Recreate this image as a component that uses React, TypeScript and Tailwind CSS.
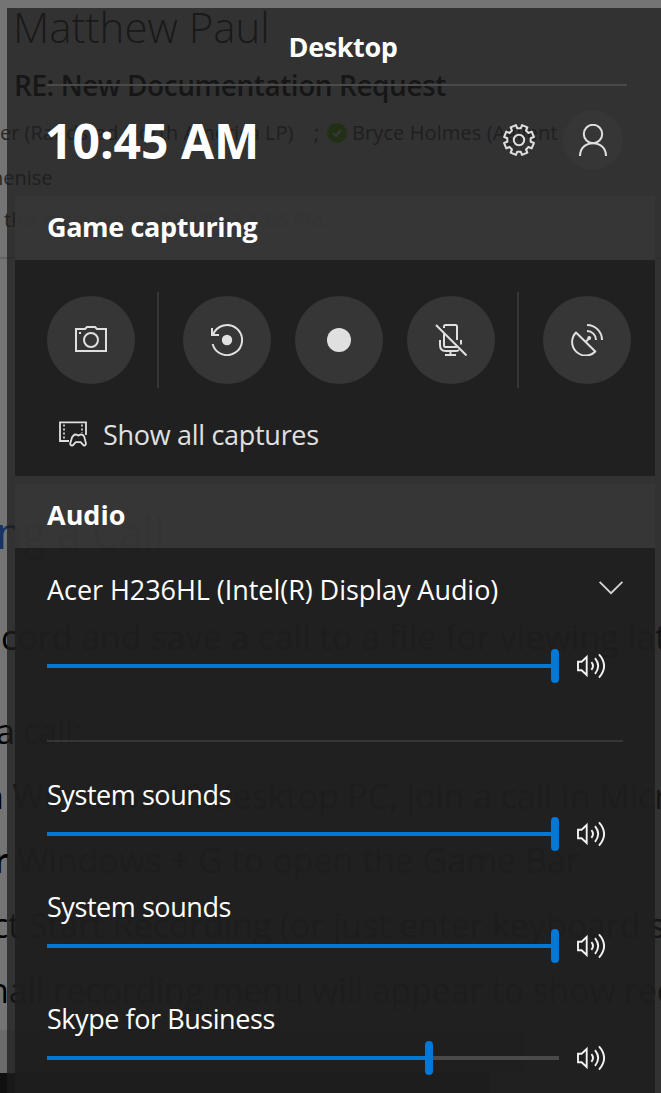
import type { ReactNode } from 'react';

const ICON = '#e0e0e0';

function gearPath(): string {
  const pts: string[] = [];
  for (let i = 0; i < 8; i++) {
    const mid = 22.5 + i * 45;
    const corners: [number, number][] = [
      [-14, 11.8],
      [-11, 15.2],
      [11, 15.2],
      [14, 11.8],
    ];
    for (const [da, r] of corners) {
      const a = ((mid + da) * Math.PI) / 180;
      pts.push(`${(16 + r * Math.sin(a)).toFixed(2)} ${(16 - r * Math.cos(a)).toFixed(2)}`);
    }
  }
  return `M${pts.join('L')}Z`;
}

function GearIcon() {
  return (
    <svg width="32" height="32" viewBox="0 0 32 32" fill="none" stroke={ICON} strokeWidth="2" strokeLinejoin="round">
      <path d={gearPath()} />
      <circle cx="16" cy="16" r="5.2" />
    </svg>
  );
}

function PersonIcon() {
  return (
    <svg width="32" height="32" viewBox="0 0 32 32" fill="none" stroke={ICON} strokeWidth="2">
      <circle cx="16" cy="10" r="9.2" />
      <path d="M3 32C3 24 9 19.2 16 19.2S29 24 29 32" />
    </svg>
  );
}

function CameraIcon() {
  return (
    <svg width="32" height="32" viewBox="0 0 32 32" fill="none" stroke={ICON} strokeWidth="2">
      <path d="M1 5H10L12 3H20L22 5H31V27H1Z" />
      <circle cx="16" cy="16" r="7" />
      <rect x="4" y="8" width="2" height="2" fill={ICON} stroke="none" />
    </svg>
  );
}

function ReplayIcon() {
  return (
    <svg width="32" height="32" viewBox="0 0 32 32" fill="none" stroke={ICON} strokeWidth="2">
      <path d="M2.2 10.4A15 15 0 1 1 1.6 20" />
      <path d="M1 4V11H8" />
      <circle cx="16" cy="16" r="5.2" fill={ICON} stroke="none" />
    </svg>
  );
}

function RecordIcon() {
  return (
    <svg width="32" height="32" viewBox="0 0 32 32">
      <circle cx="16" cy="16" r="12" fill={ICON} />
    </svg>
  );
}

function MicOffIcon() {
  return (
    <svg width="32" height="32" viewBox="0 0 32 32" fill="none" stroke={ICON} strokeWidth="2">
      <path d="M9 4V2.5Q9 1 10.5 1H20.5Q22 1 22 2.5V16" />
      <path d="M9 9V21.5Q9 23 10.5 23H22" />
      <path d="M5 16V21Q5 27 10.5 27H20.5Q22.5 27 24 26" />
      <path d="M26 16V20.5" />
      <path d="M15.5 27V31M10 31H21" />
      <path d="M1 1L31.5 31.5" />
    </svg>
  );
}

function BroadcastIcon() {
  return (
    <svg width="32" height="32" viewBox="0 0 32 32" fill="none" stroke={ICON} strokeWidth="2">
      <path d="M5 8.5L24.3 27.5A13 13 0 1 1 5 8.5Z" strokeLinejoin="round" />
      <path d="M14.5 18L18 14.5" />
      <circle cx="18.2" cy="14" r="2" fill={ICON} stroke="none" />
      <path d="M16 7A9 9 0 0 1 25 16" />
      <path d="M16 1A15 15 0 0 1 31 16" />
    </svg>
  );
}

function CapturesIcon() {
  return (
    <svg width="28" height="26" viewBox="0 0 28 26" fill="none" stroke={ICON} strokeWidth="1.8">
      <path d="M10 20H1V1.4H27V14" />
      <path d="M5 3.4V19M23 3.4V12" strokeWidth="1.6" strokeDasharray="2 2" />
      <path
        d="M14.4 14.6Q15.6 13.2 17.4 13.6L19 14.6L21.4 13.6Q24 13 25.2 15.6L27 22.6Q26.6 25 24.6 24.4L21.6 21.2H16.8L13.8 24.4Q11.4 25 11.2 22.6L13 16.4Z"
        strokeLinejoin="round"
      />
    </svg>
  );
}

function VolumeIcon() {
  return (
    <svg width="30" height="32" viewBox="0 0 30 32" fill="none" stroke="#f2f2f2" strokeWidth="1.9">
      <path d="M2 11.8H5.6L10.7 7V25L5.6 20.2H2Z" />
      <path d="M15.4 12.2Q18.6 16 15.4 19.8" />
      <path d="M19 8.2Q25.4 16 19 23.8" />
      <path d="M23 4.4Q33.2 16 23 27.6" />
    </svg>
  );
}

function ChevronIcon() {
  return (
    <svg width="24" height="14" viewBox="0 0 24 14" fill="none" stroke="#d6d6d6" strokeWidth="1.8">
      <path d="M0.6 0.8L12 12.2L23.4 0.8" />
    </svg>
  );
}

function DocumentPage() {
  return (
    <div className="flex h-full flex-col whitespace-nowrap text-black">
      <div className="h-[52px] shrink-0 pl-[13px] text-[42px] leading-[54px] font-light text-[#101010]">Matthew Paul</div>
      <div className="mt-[15px] h-9 shrink-0 pl-[14px] text-[28px] leading-[37px] font-semibold tracking-[-0.45px]">
        RE: New Documentation Request
      </div>
      <div className="mt-[18px] flex h-6 shrink-0 items-center text-[20px] leading-6 text-[#282828]">
        <span className="w-[314px]">er (Randstad North America LP)</span>
        <span className="w-[13px]">;</span>
        <span className="flex size-5 items-center justify-center rounded-full bg-[#2e6a00]">
          <svg width="12" height="12" viewBox="0 0 12 12" fill="none" stroke="#8a8a8a" strokeWidth="2">
            <path d="M2 6L5 9L10 3" />
          </svg>
        </span>
        <span className="ml-[5px] tracking-[0.1px]">Bryce Holmes (Agilent</span>
      </div>
      <div className="mt-5 -ml-[9px] h-6 shrink-0 text-[20px] leading-[25px] text-[#282828]">henise</div>
      <div className="mt-[18px] h-6 shrink-0 pl-1 text-[20px] leading-[25px] text-[#282828]">
        this message on 1/1/2018 1:06 PM.
      </div>
      <div className="mt-[26px] h-0.5 shrink-0 bg-[#646464]" />
      <div className="mt-[244px] -ml-1 h-[60px] shrink-0 text-[43px] leading-[60px] text-[#163262]">ng a Call</div>
      <div className="mt-[50px] h-12 shrink-0 pl-px text-[34px] leading-[48px]">
        cord and save a call to a file for viewing later
      </div>
      <div className="mt-[46px] -ml-1 h-12 shrink-0 text-[34px] leading-[48px] tracking-[-0.5px]">a call:</div>
      <div className="mt-[17px] -ml-[17px] h-12 shrink-0 text-[34px] leading-[48px] tracking-[-0.12px]">
        n Windows 10 desktop PC, join a call in Microsoft
      </div>
      <div className="mt-4 -ml-1.5 h-12 shrink-0 text-[34px] leading-[48px] tracking-[-0.1px]">
        <span className="font-semibold">r</span> Windows + G to open the Game Bar
      </div>
      <div className="mt-[17px] -ml-2 h-12 shrink-0 text-[34px] leading-[48px] tracking-[-0.1px]">
        ct Start Recording (or just enter keyboard sh
      </div>
      <div className="mt-[17px] -ml-3 h-12 shrink-0 text-[34px] leading-[48px] tracking-[-0.2px]">
        nall recording menu will appear to show reco
      </div>
      <div className="mt-4 h-[43px] w-[524px] shrink-0 bg-[#6b6b6b]" />
      <div className="h-5 w-[490px] shrink-0 bg-[#101010]" />
    </div>
  );
}

function SectionHeader({ children }: { children: ReactNode }) {
  return (
    <h2 className="h-16 bg-[#363636]/90 pl-8 text-[27px] leading-[62px] font-bold text-white">{children}</h2>
  );
}

function RoundButton({ label, children }: { label: string; children: ReactNode }) {
  return (
    <button aria-label={label} className="flex size-[88px] items-center justify-center rounded-full bg-[#363636]">
      {children}
    </button>
  );
}

function Slider({ value }: { value: number }) {
  return (
    <div className="flex items-center">
      <div className="flex w-[512px] items-center">
        <div className="h-1 bg-[#0078d7]" style={{ width: value }} />
        <div className="h-[34px] w-2 rounded-full bg-[#0078d7]" />
        <div className="h-1 flex-1 bg-[#4a4a4a]" />
      </div>
      <div className="ml-[17px]">
        <VolumeIcon />
      </div>
    </div>
  );
}

const apps = [
  { name: 'System sounds', value: 504 },
  { name: 'System sounds', value: 504 },
  { name: 'Skype for Business', value: 378 },
];

export default function App() {
  return (
    <div className="relative h-[1093px] w-full overflow-hidden bg-[#747474] font-['Open_Sans',sans-serif]">
      <DocumentPage />
      <main className="absolute top-2 left-[7px] h-[1085px] w-[672px] bg-[#1d1d1d]/76">
        <header className="flex h-[188px] flex-col">
          <h1 className="h-[76px] pt-px text-center text-[27px] leading-[76px] font-bold tracking-[-0.4px] text-white">
            Desktop
          </h1>
          <div className="mr-[52px] ml-10 h-0.5 bg-[#4a4a4a]" />
          <div className="flex h-[108px] items-center pr-14 pl-[38px]">
            <div className="flex-1 pt-0.5 text-[48px] leading-[60px] font-bold text-white">10:45 AM</div>
            <GearIcon />
            <div className="ml-7 flex size-[60px] items-center justify-center rounded-full bg-[#363636]/90">
              <PersonIcon />
            </div>
          </div>
        </header>

        <section className="ml-2 w-[640px]">
          <SectionHeader>
            <span className="tracking-[-0.37px]">Game capturing</span>
          </SectionHeader>
          <div className="h-[216px] bg-[#1e1e1e]/90 px-8 pt-8">
            <div className="flex h-24 w-[584px] items-center">
              <RoundButton label="Take screenshot"><CameraIcon /></RoundButton>
              <div className="mr-6 ml-[22px] h-24 w-0.5 bg-[#363636]" />
              <div className="flex gap-6">
                <RoundButton label="Record last"><ReplayIcon /></RoundButton>
                <RoundButton label="Start recording"><RecordIcon /></RoundButton>
                <RoundButton label="Microphone"><MicOffIcon /></RoundButton>
              </div>
              <div className="mr-6 ml-[22px] h-24 w-0.5 bg-[#363636]" />
              <RoundButton label="Broadcast"><BroadcastIcon /></RoundButton>
            </div>
            <div className="mt-[26px] flex h-10 items-center gap-4 pl-3 text-[27px] leading-10 tracking-[-0.3px] text-[#e0e0e0]">
              <CapturesIcon />
              <span className="pt-0.5">Show all captures</span>
            </div>
          </div>
        </section>

        <section className="mt-2 ml-2 w-[640px]">
          <SectionHeader>Audio</SectionHeader>
          <div className="h-[545px] bg-[#1e1e1e]/90 px-8 text-[27px] text-white">
            <div className="flex h-[83px] items-center justify-between">
              <span className="pt-0.5 tracking-[-0.05px]">Acer H236HL (Intel(R) Display Audio)</span>
              <div className="pb-[3px]">
                <ChevronIcon />
              </div>
            </div>
            <div className="flex h-[69px] items-center">
              <Slider value={504} />
            </div>
            <div className="mt-10 h-0.5 w-[576px] bg-[#363636]" />
            <div className="flex flex-col gap-[34px] pt-8">
              {apps.map((app, i) => (
                <div key={i}>
                  <div className="h-[42px] leading-[42px] tracking-[-0.44px]">{app.name}</div>
                  <div className="flex h-9 items-center">
                    <Slider value={app.value} />
                  </div>
                </div>
              ))}
            </div>
          </div>
        </section>
      </main>
    </div>
  );
}
